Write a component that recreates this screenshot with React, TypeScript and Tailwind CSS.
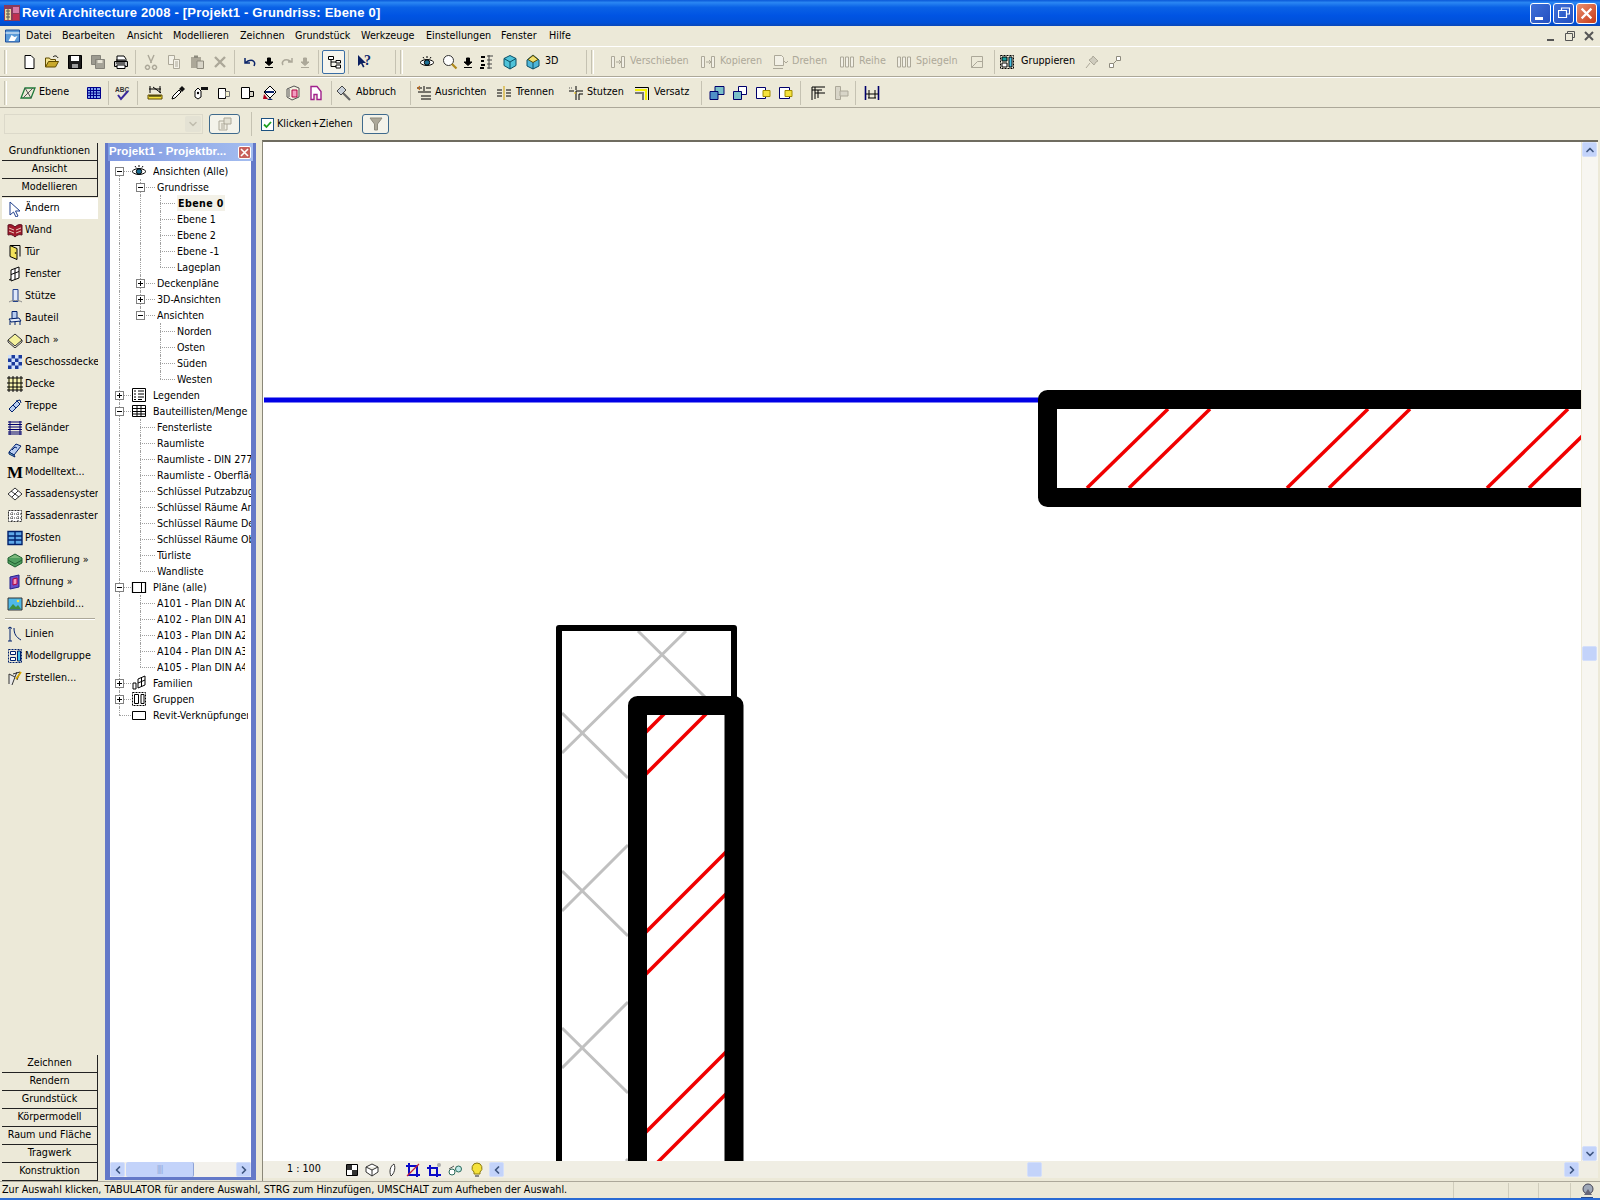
import React from 'react';
import { ChevronDown, ChevronLeft, ChevronRight, ChevronUp } from 'lucide-react';

type IconName = keyof typeof paths;

// small 16x16 toolbar and palette glyphs
const paths = {
  newDoc: <path d="M4 1.5h6l3 3v10H4z" fill="#fff" stroke="#000" />,
  open: <><path d="M1.5 13V4h4l1 1.5h5V8" fill="#f3e28c" stroke="#5f4b00" /><path d="M1.5 13l3-5.5h10l-3 5.5z" fill="#c9a92c" stroke="#5f4b00" /><path d="M9 3c2-2 4-1 5 1" fill="none" stroke="#000" /></>,
  save: <><path d="M1.5 1.5h13v13h-13z" fill="#1c1c1c" stroke="#000" /><path d="M4 2h8v5H4z" fill="#fff" /><path d="M5 10h6v4H5z" fill="#9c9c9c" /></>,
  saveAll: <><path d="M1.5 1.5h9v9h-9z" fill="#9c9a90" stroke="#85837a" /><path d="M5.5 5.5h9v9h-9z" fill="#a5a398" stroke="#85837a" /><path d="M7.5 6h5v3h-5z" fill="#e6e3d6" /></>,
  print: <><path d="M4 2h7l2 3v2H4z" fill="#fff" stroke="#000" /><path d="M1.5 7.5h13v5h-13z" fill="#c8c8c8" stroke="#000" /><path d="M4 11h8v3.5H4z" fill="#fff" stroke="#000" /><path d="M3 9h9M3 6h9" stroke="#000" /></>,
  cut: <path d="M5 1l3.5 8M11 1L7.5 9M6 12a2 2 0 1 1-3 0 2 2 0 0 1 3 0zM13 12a2 2 0 1 1-3 0 2 2 0 0 1 3 0z" fill="none" stroke="#aca899" strokeWidth="1.4" />,
  copy: <><path d="M2.5 1.5h6v9h-6z" fill="#f4f2e8" stroke="#aca899" /><path d="M7.5 5.5h6v9h-6z" fill="#f4f2e8" stroke="#aca899" /><path d="M9 8h3M9 10h3M9 12h3" stroke="#aca899" /></>,
  paste: <><path d="M2 3h10v11H2z" fill="#aca899" /><path d="M5 1.5h4V4H5z" fill="#8d8a7d" /><path d="M8 7h6.5v7.5H8z" fill="#d8d5c8" stroke="#8d8a7d" /></>,
  del: <path d="M3 3l10 10M13 3L3 13" stroke="#aca899" strokeWidth="2.4" />,
  undo: <path d="M12 12c2-4-1-7-6-5L3 9m0-5v5h5" fill="none" stroke="#0a246a" strokeWidth="1.5" />,
  downArrow: <path d="M6.5 4h3v4H12l-4 3.5L4 8h2.5zM4 13.5h8" fill="#000" stroke="#000" />,
  downArrowOff: <path d="M6.5 4h3v4H12l-4 3.5L4 8h2.5zM4 13.5h8" fill="#aca899" stroke="#aca899" />,
  redo: <path d="M4 11c-2-3 1-6 5-5l4 2m0-4v4H9" fill="none" stroke="#aca899" strokeWidth="1.5" />,
  browser: <><path d="M2.5 2.5h5v3h-5zM10 6.5h4.5V9H10zM10 11h4.5v3H10z" fill="#fff" stroke="#000" /><path d="M5 5.5v7h5M5 8h5" fill="none" stroke="#000" /></>,
  help: <><path d="M1 1v11l3-2.5 2 4 1.5-.8-2-3.7H9z" fill="#0a1f60" /><text x="7" y="11" fontSize="14" fontWeight="700" fill="#0a246a" fontFamily="Liberation Serif, serif">?</text></>,
  eye: <><path d="M1 8.5c3-4 11-4 14 0-3 4-11 4-14 0z" fill="#fff" stroke="#000" /><circle cx="8" cy="8.5" r="2.7" fill="#1c6f94" stroke="#000" /><path d="M4 3l1 1.5M8 2v2M12 3l-1 1.5" stroke="#000" /></>,
  mag: <><circle cx="6.5" cy="6.5" r="5" fill="#fff" stroke="#333" /><path d="M10 10l4.5 4.5" stroke="#b08a1c" strokeWidth="2.2" /></>,
  layers: <><path d="M3 2h4v2H3zM3 6h3v2H3zM3 10h4v2H3zM2 13h4v2H2z" fill="#000" /><path d="M9 2h6M9 6h5M9 10h5M9 14h5M11 1v14" stroke="#444" /></>,
  cube: <><path d="M8 1.5l6 3v7L8 15l-6-3.5v-7z" fill="#4fc3d9" stroke="#0a4f66" /><path d="M2 4.5L8 8l6-3.5M8 8v7" fill="none" stroke="#0a4f66" /></>,
  house: <><path d="M8 1l6 5v6l-6 3-6-3V6z" fill="#4fb6d9" stroke="#0a4f66" /><path d="M3 5.5l5-4 5 4-5 3z" fill="#f0e070" stroke="#5f4b00" /><path d="M8 8.5V15" stroke="#0a4f66" /></>,
  moveOff: <><path d="M1.5 2.5h3v11h-3zM11.5 2.5h3v11h-3z" fill="#f2f0e6" stroke="#aca899" /><path d="M6 8h5M9 6l2 2-2 2" fill="none" stroke="#aca899" /></>,
  rotateOff: <><path d="M2.5 1.5h7l2 2v8h-9z" fill="#f2f0e6" stroke="#aca899" /><path d="M1 14.5h10M12 7l2 2 2-2" fill="none" stroke="#aca899" /></>,
  arrayOff: <path d="M1.5 3h3v10h-3zM6.5 3h3v10h-3zM11.5 3h3v10h-3z" fill="#f2f0e6" stroke="#aca899" />,
  resizeOff: <><path d="M2.5 2.5h11v11h-11z" fill="none" stroke="#aca899" /><path d="M2.5 13.5l6-6h5" fill="none" stroke="#aca899" /></>,
  group: <><path d="M1.5 1.5h13v13h-13z" fill="none" stroke="#000" strokeDasharray="2 1" /><path d="M3 3h5v4H3z" fill="#16a3a3" stroke="#000" /><path d="M10 3h3v10h-3z" fill="#49c4e8" stroke="#000" /><path d="M3 9h5v4H3z" fill="#fff" stroke="#000" /></>,
  pinOff: <path d="M9 2l5 5-2 1-2 3-5-5 3-2zM6 9l-4 5" fill="#cfccbe" stroke="#aca899" />,
  linkOff: <path d="M2.5 9.5h4v4h-4zM9.5 2.5h4v4h-4zM6.5 9.5l3-3" fill="#fff" stroke="#8d8a7d" />,
  plane: <><path d="M5 3h10l-4 10H1z" fill="none" stroke="#1f7a3a" strokeWidth="1.3" /><path d="M3 13L13 3M5 3l6 10" stroke="#555" /></>,
  grid: <><path d="M1.5 2.5h13v11h-13z" fill="#7fa3ee" stroke="#00008c" /><path d="M1 5.5h14M1 8h14M1 10.5h14M4.5 2v12M7.5 2v12M10.5 2v12" stroke="#00008c" /></>,
  spell: <><text x="0" y="6.5" fontSize="6.5" fontWeight="700" fill="#333" fontFamily="Liberation Sans, sans-serif">ABC</text><path d="M3 10l3 4 7-8" fill="none" stroke="#3a2a9c" strokeWidth="2" /></>,
  measure: <><path d="M2 4h12M3 1v7M13 1v7M6 2l8 6" fill="none" stroke="#000" /><path d="M1 10h14v4H1z" fill="#f5e23c" stroke="#5f4b00" /><path d="M3 10v2M5 10v2M7 10v2M9 10v2M11 10v2M13 10v2" stroke="#000" /></>,
  dropper: <><path d="M2 14l1-3 6-6 2 2-6 6z" fill="#fff" stroke="#000" /><path d="M9 4l3-3 3 3-3 3z" fill="#111" /></>,
  tag: <><path d="M2 12V6l3-3 3 3v6l-3 2z" fill="#fff" stroke="#000" /><path d="M8 2h7v3H8z" fill="#111" /><circle cx="5" cy="8" r="1.2" fill="#000" /></>,
  wallL: <><path d="M2.5 3.5h7v10h-7z" fill="#fff" stroke="#000" /><path d="M9.5 6.5h4v5h-4z" fill="#f4f1d0" stroke="#777" /></>,
  wallR: <><path d="M2.5 2.5h8v11h-8z" fill="#fff" stroke="#000" /><path d="M10.5 6.5h4v5h-4z" fill="#d8d5c8" stroke="#000" /></>,
  paint: <><path d="M8 1l6 6-6 6-6-6z" fill="#fff" stroke="#000" /><path d="M2 9l4 5H1z" fill="#b00020" /><path d="M8 13l3 2H5z" fill="#0a246a" /><path d="M3 7h9" stroke="#0a246a" strokeWidth="2" /></>,
  cubeRed: <><path d="M2 4l7-3 5 2v9l-7 3-5-3z" fill="#f2efe0" stroke="#555" /><path d="M7 5h5v7H7z" fill="#f29cc0" stroke="#b00040" /><path d="M4 4v8" stroke="#555" /></>,
  notch: <path d="M3 1.5h6l4 5v8H9v-5H6v5H3z" fill="#fff" stroke="#a0208c" strokeWidth="1.4" />,
  hammer: <><path d="M6 7l8 8" stroke="#666" strokeWidth="2.2" /><path d="M1 6l5-5 4 4-5 5z" fill="#c8d0d8" stroke="#444" /></>,
  align: <><path d="M1 3h5M10 3h5M8 1v5M2 7h13M5 11h10M5 14h10" fill="none" stroke="#000" /><path d="M4 5L1.5 3 4 1" fill="none" stroke="#d06000" /></>,
  split: <><path d="M1 5h5M10 5h5M1 8h5M10 8h5M1 11h5M10 11h5" fill="none" stroke="#000" /><path d="M8 1v14" stroke="#d0a000" /></>,
  trim: <><path d="M1 6h5M8 1v4M8 6h7M8 6v9M11 9h4M11 9v6" fill="none" stroke="#000" /><path d="M1 3h4" stroke="#555" strokeDasharray="1 1" /><path d="M6 8h2" stroke="#f0c000" /></>,
  offset: <><path d="M1 2.5h13.5V15" fill="none" stroke="#000" /><path d="M1 5h11v10" fill="none" stroke="#f5f000" strokeWidth="2" /><path d="M1 8h8v7" fill="none" stroke="#777" strokeWidth="2" /></>,
  join: <><path d="M6 1.5h9v8H6z" fill="#7ac0c8" stroke="#00006c" /><path d="M1 6.5h8v8H1z" fill="#4f8fc8" stroke="#00006c" /></>,
  unjoin: <><path d="M6.5 1.5h8v8h-8z" fill="#fff" stroke="#00006c" /><path d="M1.5 6.5h8v8h-8z" fill="#7ac0c8" stroke="#00006c" /></>,
  cutY: <><path d="M1.5 2.5h9v11h-9z" fill="#fff" stroke="#00006c" /><path d="M8 5.5h7v6H8z" fill="#f5e23c" stroke="#a08c00" /></>,
  cutY2: <><path d="M1.5 2.5h10v11h-10z" fill="#fff" stroke="#00006c" /><path d="M7 5.5h7v6H7z" fill="#f5e23c" stroke="#a08c00" /></>,
  corner: <path d="M2 2h13M2 5h10M2 2v13M5 2v12M5 8h10M8 5v8" fill="none" stroke="#000" />,
  beamOff: <><path d="M2.5 1.5h5v13h-5z" fill="#d8d5c8" stroke="#aca899" /><path d="M7 6h8v5H7z" fill="#d8d5c8" stroke="#aca899" /></>,
  dim: <><path d="M1.5 1v14M14.5 1v14" stroke="#00006c" strokeWidth="1.6" /><path d="M2 9h12M5 5v8M11 5v8M4 13h8" stroke="#000" /></>,
  cursor: <path d="M3 1v13l3.5-3 2.5 5 2-1-2.5-5H13z" fill="#fff" stroke="#1f3f8c" />,
  wall: <><path d="M1 3c3-1 5 0 7 2 2-2 4-3 7-2v10c-3-1-5 0-7 2-2-2-4-3-7-2z" fill="#a11a2c" stroke="#5a1020" /><path d="M2 6l5 2M2 9l5 2M14 6L9 8M14 9l-5 2" stroke="#e8c8b8" /></>,
  door: <><path d="M3 1.5h10v11" fill="none" stroke="#000" /><path d="M3 1.5l7 3v11l-7-3z" fill="#f2e25c" stroke="#000" /><circle cx="8.5" cy="9" r=".8" fill="#000" /></>,
  window: <path d="M4 4l8-3v11l-8 3zM8 2.5v11M4 8.5l8-3M2 14l2-1" fill="#fff" stroke="#000" />,
  column: <><path d="M6 1.5h5v12H6z" fill="#dfe8fa" stroke="#1f3f8c" /><path d="M2 14c3-2 10-2 13 0" fill="none" stroke="#888" /></>,
  chair: <><path d="M5 1.5h5v7H5z" fill="#b8cdf0" stroke="#00206c" /><path d="M2 9l10-1 2 3-10 1zM3 11v4M13 11v4M8 12v3" fill="#e5ecf8" stroke="#00206c" /></>,
  roof: <><path d="M1 8l7-6 7 6-7 6z" fill="#f4f19c" stroke="#333" /><path d="M1 8v2l7 6 7-6V8" fill="none" stroke="#333" /></>,
  floor: <><path d="M1 1h14v14H1z" fill="#1a3a9c" /><path d="M1 1h3.5v3.5H1zM8 1h3.5v3.5H8zM4.5 4.5H8V8H4.5zM11.5 4.5H15V8h-3.5zM1 8h3.5v3.5H1zM8 8h3.5v3.5H8zM4.5 11.5H8V15H4.5zM11.5 11.5H15V15h-3.5z" fill="#cfe0fa" /></>,
  ceiling: <><path d="M1 2h14v12H1z" fill="#f9f5b0" /><path d="M0 2h16M0 7h16M0 11h16M0 14h16M2 0v16M6 0v16M10 0v16M14 0v16" stroke="#000" /></>,
  stairs: <><path d="M2 11l4-4 3 3-4 4zM6 7l4-4 3 3-4 4z" fill="#b8cdf0" stroke="#00206c" /><path d="M9 3l4-1 1 3" fill="none" stroke="#00206c" /></>,
  rail: <path d="M1 2h14M1 4.5h14M1 7h14M1 9.5h14M1 12h14M1 14h14M3 1v14M13 1v14" stroke="#00006c" />,
  ramp: <><path d="M2 10l7-8 5 2-7 9z" fill="#b8cdf0" stroke="#00206c" /><path d="M2 10l5 3 1 2-6-3z" fill="#7ac0c8" stroke="#00206c" /><path d="M5 8l3-3 2 1" fill="none" stroke="#00206c" /></>,
  curtain: <><path d="M1 8l7-6 7 6-7 6z" fill="#fff" stroke="#333" /><path d="M4 5l8 6M5 11l6-6" stroke="#333" /></>,
  curtainGrid: <><path d="M1.5 2.5h13v11h-13z" fill="#fff" stroke="#333" strokeDasharray="2 1" /><path d="M1 6h14M1 10h14M5 2v12M11 2v12" stroke="#333" strokeDasharray="1 1" /></>,
  mullion: <><path d="M1 1.5h14v13H1z" fill="#5fa8e8" stroke="#00206c" strokeWidth="1.4" /><path d="M1 6h14M1 10h14M8 1v14" stroke="#00206c" strokeWidth="1.4" /></>,
  sweep: <><path d="M1 6l7-4 7 4-7 4z" fill="#7ab87a" stroke="#1f5f2f" /><path d="M1 6v5l7 4 7-4V6" fill="#4f9f5f" stroke="#1f5f2f" /><path d="M1 8l7 4 7-4" fill="none" stroke="#1f5f2f" /></>,
  opening: <><path d="M3 3l9-2v12l-9 2z" fill="#6a4fc8" stroke="#1f1f8c" /><path d="M6 5l4-1v6l-4 1z" fill="#f29cc0" stroke="#b00040" /></>,
  decal: <><path d="M1 2h14v12H1z" fill="#4fb8e8" stroke="#333" /><path d="M2 13l4-5 3 3 2-2 3 4z" fill="#3f8f3f" /><circle cx="11" cy="5" r="1.3" fill="#f5e23c" /></>,
  lines: <path d="M3 1v14M1 2.5L3 1l2 1.5M1 15h4M7 2c0 6 2 9 7 12" fill="none" stroke="#00206c" />,
  modelGroup: <><path d="M1.5 1.5h13v13h-13z" fill="none" stroke="#00206c" strokeDasharray="2 1" /><path d="M3.5 3.5h5v3h-5zM3.5 9.5h5v3h-5z" fill="#fff" stroke="#00206c" /><path d="M10.5 3h3v10h-3z" fill="#49c4e8" stroke="#00206c" /></>,
  create: <><path d="M2 14V4l6 3-3 8M8 7l2-5M6 4l7-2-3 8" fill="#e8e8e8" stroke="#333" /><path d="M9 9l5-7" stroke="#d8a800" strokeWidth="1.8" /></>,
  legend: <><path d="M1.5 1.5h13v13h-13z" fill="#fff" stroke="#000" /><path d="M3 4h2M7 4h6M3 7h2M7 7h6M3 10h2M7 10h6M3 12.5h2M7 12.5h4" stroke="#000" /></>,
  table: <><path d="M1.5 2.5h13v11h-13z" fill="#fff" stroke="#000" /><path d="M1 5.5h14M1 8.5h14M1 11h14M6 3v10M10 3v10" stroke="#000" /></>,
  sheet: <><path d="M1.5 3.5h13v10h-13z" fill="#fff" stroke="#000" strokeWidth="1.2" /><path d="M10.5 3v10" stroke="#000" /></>,
  family: <><path d="M2 8h3v6H2z" fill="none" stroke="#000" /><path d="M7 4l7-3v9l-7 3zM10.5 2.5v9M7 8l7-3" fill="#fff" stroke="#000" /></>,
  groups: <><path d="M1.5 1.5h13v13h-13z" fill="none" stroke="#000" strokeDasharray="2 1" /><path d="M3.5 3.5h4v9h-4zM10 3.5h3v9h-3z" fill="#fff" stroke="#000" /></>,
  linkRect: <path d="M1.5 4.5h13v8h-13z" fill="#fff" stroke="#000" />,
  viewBox: <><path d="M2.5 2.5h11v11h-11z" fill="#fff" stroke="#000" /><path d="M3 3h5v5H3zM8 8h5v5H8z" fill="#333" /></>,
  wire: <path d="M8 2l6 3v5l-6 4-6-4V5zM2 5l6 3 6-3M8 8v6" fill="#fff" stroke="#333" />,
  sun: <path d="M9 2C5 4 4 10 6 14c3-2 5-8 3-12z" fill="#fff" stroke="#333" />,
  crop: <><path d="M4 1v12h11M1 4h11v11" fill="none" stroke="#0a0ac8" strokeWidth="2" /><path d="M2 14L14 2" stroke="#c02040" strokeWidth="1.3" /></>,
  crop2: <><path d="M4 3v10h11M1 6h10v9" fill="none" stroke="#0a0ac8" strokeWidth="2" /><circle cx="13" cy="3" r="2" fill="#aaa" /></>,
  glasses: <><circle cx="5" cy="10" r="3" fill="#fff" stroke="#2a6a5a" /><circle cx="11.5" cy="7" r="3" fill="#bfe8e8" stroke="#2a6a5a" /><path d="M2 7l5-3" stroke="#555" /></>,
  bulb: <><path d="M8 1a5 5 0 0 1 3 9v2H5v-2A5 5 0 0 1 8 1z" fill="#f5e23c" stroke="#8a7a10" /><path d="M6 13h4v2H6z" fill="#888" /></>,
  dish: <><circle cx="9" cy="6" r="5" fill="#9fa8b8" stroke="#445" /><path d="M5 12l4-6 4 6z" fill="#667" /><path d="M2 15h12" stroke="#2a4a8c" strokeWidth="2" /></>,
};

const Icon = ({ name, size = 16 }: { name: IconName; size?: number }) => (
  <svg viewBox="0 0 16 16" width={size} height={size} className="shrink-0">
    {paths[name]}
  </svg>
);

const Tool = ({ name, className = 'w-[23px]' }: { name: IconName; className?: string }) => (
  <div className={`flex h-[22px] shrink-0 items-center justify-center ${className}`}>
    <Icon name={name} />
  </div>
);

const Labeled = ({
  name,
  label,
  className,
  off = false,
  gap = 'gap-[4px]',
}: {
  name: IconName;
  label: string;
  className: string;
  off?: boolean;
  gap?: string;
}) => (
  <div className={`flex h-[22px] shrink-0 items-center ${gap} ${className}`}>
    <Icon name={name} />
    <span className={off ? 'text-[#aca899]' : 'text-black'}>{label}</span>
  </div>
);

const Sep = ({ className = '' }: { className?: string }) => (
  <div className={`h-[24px] w-px shrink-0 bg-[#c5c2b2] ${className}`} />
);

const Grip = () => <div className="ml-[4px] h-[24px] w-[3px] shrink-0 border-l border-[#c5c2b2] border-r border-r-white" />;

const MenuBar = () => {
  const items = [
    ['Datei', 'w-[36px]'],
    ['Bearbeiten', 'w-[65px]'],
    ['Ansicht', 'w-[46px]'],
    ['Modellieren', 'w-[67px]'],
    ['Zeichnen', 'w-[55px]'],
    ['Grundstück', 'w-[66px]'],
    ['Werkzeuge', 'w-[65px]'],
    ['Einstellungen', 'w-[75px]'],
    ['Fenster', 'w-[48px]'],
    ['Hilfe', 'w-[30px]'],
  ];
  return (
    <div className="flex h-[20px] shrink-0 items-center bg-[#ece9d8] pl-[4px] text-[10.7px]">
      <svg viewBox="0 0 16 16" width="17" height="16" className="mr-[5px] shrink-0">
        <path d="M1 2h14v12H1z" fill="#5a9ad8" stroke="#1f4f9c" />
        <path d="M1 5h14" stroke="#fff" />
        <path d="M4 13l3-6 3 2 3-1-3 5z" fill="#fff" />
      </svg>
      {items.map(([t, w]) => (
        <span key={t} className={`shrink-0 ${w}`}>{t}</span>
      ))}
      <div className="ml-auto flex items-center pr-[2px]">
        <div className="flex h-[18px] w-[19px] items-end justify-center pb-[4px]">
          <div className="h-[2px] w-[7px] bg-[#555]" />
        </div>
        <div className="flex h-[18px] w-[19px] items-center justify-center">
          <svg viewBox="0 0 10 10" width="10" height="10"><path d="M2.5 2.5V.5h7v6h-2M.5 2.5h7v7h-7z" fill="none" stroke="#555" /></svg>
        </div>
        <div className="flex h-[18px] w-[19px] items-center justify-center">
          <svg viewBox="0 0 10 10" width="10" height="10"><path d="M1 1l8 8M9 1L1 9" stroke="#555" strokeWidth="2" /></svg>
        </div>
      </div>
    </div>
  );
};

const TitleBar = () => (
  <div className="flex h-[26px] shrink-0 items-center bg-[linear-gradient(180deg,#0a58d8_0%,#2a86f2_10%,#0a62e6_28%,#0054e3_60%,#0050d8_88%,#0a48b8_100%)] pl-[4px] pr-[3px]">
    <svg viewBox="0 0 16 16" width="16" height="16" className="shrink-0">
      <path d="M0 0h16v16H0z" fill="#8a3a5a" />
      <path d="M1 4h6v11H1z" fill="#e8d8a0" />
      <path d="M9 2h6v6H9z" fill="#d87aa8" />
      <path d="M2 6h4M2 9h4M2 12h4M4 4v11" stroke="#555" />
      <path d="M9 9h6v6H9z" fill="#c03050" />
    </svg>
    <span className="ml-[2px] font-['Liberation_Sans',sans-serif] text-[13px] font-bold tracking-[0.2px] text-white">
      Revit Architecture 2008 - [Projekt1 - Grundriss: Ebene 0]
    </span>
    <div className="ml-auto flex items-center gap-[2px]">
      <div className="flex h-[21px] w-[21px] items-end rounded-[3px] border border-white bg-[linear-gradient(135deg,#3f70d8,#2450c0)] pb-[3px] pl-[4px]">
        <div className="h-[3px] w-[8px] bg-white" />
      </div>
      <div className="flex h-[21px] w-[21px] items-center justify-center rounded-[3px] border border-white bg-[linear-gradient(135deg,#3f70d8,#2450c0)]">
        <svg viewBox="0 0 12 12" width="12" height="12"><path d="M3.5 3V1h8v6H9M.5 3.5h8v7h-8z" fill="none" stroke="#fff" strokeWidth="1.2" /></svg>
      </div>
      <div className="flex h-[21px] w-[21px] items-center justify-center rounded-[3px] border border-white bg-[linear-gradient(135deg,#e89070,#c83a18)]">
        <svg viewBox="0 0 12 12" width="13" height="13"><path d="M1.5 1.5l9 9M10.5 1.5l-9 9" stroke="#fff" strokeWidth="2" /></svg>
      </div>
    </div>
  </div>
);

const ToolbarOne = () => (
  <div className="flex h-[31px] shrink-0 items-center border-y border-t-white border-b-[#aca899] bg-[#ece9d8] text-[10.7px]">
    <Grip />
    <Tool name="newDoc" className="ml-[10px] w-[23px]" />
    <Tool name="open" />
    <Tool name="save" />
    <Tool name="saveAll" />
    <Tool name="print" />
    <Sep className="ml-[3px] mr-[3px]" />
    <Tool name="cut" />
    <Tool name="copy" />
    <Tool name="paste" />
    <Tool name="del" />
    <Sep className="ml-[3px] mr-[3px]" />
    <Tool name="undo" />
    <Tool name="downArrow" className="w-[16px]" />
    <Tool name="redo" className="w-[20px]" />
    <Tool name="downArrowOff" className="w-[16px]" />
    <Sep className="ml-[5px] mr-[3px]" />
    <div className="flex h-[24px] w-[23px] shrink-0 items-center justify-center rounded-[2px] border border-[#3a6ea5] bg-[#f6f5ee]">
      <Icon name="browser" />
    </div>
    <Sep className="ml-[3px]" />
    <Tool name="help" className="ml-[4px] w-[23px]" />
    <Sep className="ml-[19px]" />
    <Grip />
    <Tool name="eye" className="ml-[12px] w-[23px]" />
    <Tool name="mag" />
    <Tool name="downArrow" className="w-[14px]" />
    <Tool name="layers" className="w-[21px]" />
    <Tool name="cube" className="ml-[2px] w-[23px]" />
    <Tool name="house" />
    <span className="w-[42px] shrink-0 pl-[1px]">3D</span>
    <Sep />
    <Grip />
    <Labeled name="moveOff" label="Verschieben" off className="ml-[16px] w-[90px]" />
    <Labeled name="moveOff" label="Kopieren" off className="w-[72px]" />
    <Labeled name="rotateOff" label="Drehen" off className="w-[67px]" />
    <Labeled name="arrayOff" label="Reihe" off className="w-[57px]" />
    <Labeled name="arrayOff" label="Spiegeln" off className="w-[73px]" />
    <Tool name="resizeOff" className="w-[16px]" />
    <Sep className="ml-[9px]" />
    <Labeled name="group" label="Gruppieren" className="ml-[4px] gap-[6px] w-[85px]" />
    <Tool name="pinOff" className="w-[16px]" />
    <Tool name="linkOff" className="ml-[7px] w-[16px]" />
  </div>
);

const ToolbarTwo = () => (
  <div className="flex h-[31px] shrink-0 items-center border-b border-b-[#aca899] border-t border-t-white bg-[#ece9d8] text-[10.7px]">
    <Grip />
    <Labeled name="plane" label="Ebene" gap="gap-[3px]" className="ml-[13px] w-[62px]" />
    <Tool name="grid" />
    <Sep className="ml-[3px]" />
    <Tool name="spell" className="ml-[2px] w-[23px]" />
    <Sep className="ml-[3px]" />
    <Tool name="measure" className="ml-[5px] w-[23px]" />
    <Tool name="dropper" />
    <Tool name="tag" />
    <Tool name="wallL" />
    <Tool name="wallR" />
    <Tool name="paint" />
    <Tool name="cubeRed" />
    <Tool name="notch" />
    <Sep className="ml-[4px]" />
    <Labeled name="hammer" label="Abbruch" className="ml-[4px] w-[71px]" />
    <Sep className="ml-[3px]" />
    <Labeled name="align" label="Ausrichten" gap="gap-[3px]" className="ml-[5px] w-[80px]" />
    <Labeled name="split" label="Trennen" className="w-[72px]" />
    <Labeled name="trim" label="Stutzen" gap="gap-[3px]" className="w-[66px]" />
    <Labeled name="offset" label="Versatz" className="w-[62px]" />
    <Sep className="ml-[5px]" />
    <Tool name="join" className="ml-[3px] w-[23px]" />
    <Tool name="unjoin" />
    <Tool name="cutY" />
    <Tool name="cutY2" />
    <Sep className="ml-[3px]" />
    <Tool name="corner" className="ml-[5px] w-[23px]" />
    <Tool name="beamOff" />
    <Sep className="ml-[3px]" />
    <Tool name="dim" className="ml-[4px] w-[23px]" />
  </div>
);

const OptionsBar = () => (
  <div className="flex h-[33px] shrink-0 items-center bg-[#ece9d8] pb-[1px] text-[10.7px]">
    <div className="ml-[4px] flex h-[20px] w-[199px] shrink-0 items-center justify-end border border-[#dcd9ca] pr-[1px]">
      <div className="flex h-[16px] w-[16px] items-center justify-center rounded-[2px] bg-[#e4e2d4]">
        <ChevronDown size={12} strokeWidth={3} color="#c0bdae" />
      </div>
    </div>
    <div className="ml-[6px] flex h-[20px] w-[31px] shrink-0 items-center justify-center rounded-[3px] border border-[#3f6a8c] bg-[#f4f3ea]">
      <svg viewBox="0 0 16 16" width="16" height="16"><path d="M2 5h8v9H2z" fill="#f0eee2" stroke="#aca899" /><path d="M7 2h7v6H7z" fill="#e4e2d4" stroke="#aca899" /><path d="M4 8h4M4 10h4M4 12h4" stroke="#aca899" /></svg>
    </div>
    <Sep className="ml-[11px]" />
    <div className="ml-[9px] flex h-[13px] w-[13px] shrink-0 items-center justify-center border border-[#1c5180] bg-white">
      <svg viewBox="0 0 11 11" width="11" height="11"><path d="M2 5.5L4.500 8 9 3" fill="none" stroke="#21a121" strokeWidth="1.8" /></svg>
    </div>
    <span className="ml-[3px] w-[85px] shrink-0">Klicken+Ziehen</span>
    <div className="flex h-[20px] w-[27px] shrink-0 items-center justify-center rounded-[3px] border border-[#3f6a8c] bg-[#f4f3ea]">
      <svg viewBox="0 0 16 16" width="16" height="16"><path d="M2 2h12L9.500 8v6h-3V8z" fill="#aca899" stroke="#8d8a7d" /></svg>
    </div>
  </div>
);

const Tab = ({ label }: { label: string }) => (
  <div className="flex h-[18px] shrink-0 items-center justify-center border-b border-r border-b-[#222] border-r-[#222] bg-[#ece9d8] text-[10.7px]">
    {label}
  </div>
);

const tools: [IconName | 'M', string][] = [
  ['wall', 'Wand'],
  ['door', 'Tür'],
  ['window', 'Fenster'],
  ['column', 'Stütze'],
  ['chair', 'Bauteil'],
  ['roof', 'Dach »'],
  ['floor', 'Geschossdecke'],
  ['ceiling', 'Decke'],
  ['stairs', 'Treppe'],
  ['rail', 'Geländer'],
  ['ramp', 'Rampe'],
  ['M', 'Modelltext...'],
  ['curtain', 'Fassadensystem'],
  ['curtainGrid', 'Fassadenraster'],
  ['mullion', 'Pfosten'],
  ['sweep', 'Profilierung »'],
  ['opening', 'Öffnung »'],
  ['decal', 'Abziehbild...'],
];

const ToolRow = ({ icon, label }: { icon: IconName | 'M'; label: string }) => (
  <div className="flex h-[22px] shrink-0 items-center gap-[2px] overflow-hidden whitespace-nowrap pl-[5px] text-[10.7px]">
    {icon === 'M' ? (
      <span className="w-[16px] shrink-0 text-center font-['Liberation_Serif',serif] text-[17px] font-bold leading-none">M</span>
    ) : (
      <Icon name={icon} />
    )}
    <span>{label}</span>
  </div>
);

const Sidebar = () => (
  <div className="flex w-[98px] shrink-0 flex-col pl-[2px] pt-[2px]">
    <Tab label="Grundfunktionen" />
    <Tab label="Ansicht" />
    <Tab label="Modellieren" />
    <div className="mt-[1px] flex h-[21px] items-center gap-[2px] bg-white pl-[5px] text-[10.7px]">
      <Icon name="cursor" />
      <span>Ändern</span>
    </div>
    {tools.map(([icon, label]) => (
      <ToolRow key={label} icon={icon} label={label} />
    ))}
    <div className="mx-[3px] my-[3px] h-[2px] border-t border-b border-t-[#aca899] border-b-white" />
    <ToolRow icon="lines" label="Linien" />
    <ToolRow icon="modelGroup" label="Modellgruppe" />
    <ToolRow icon="create" label="Erstellen..." />
    <div className="mt-auto flex flex-col">
      {['Zeichnen', 'Rendern', 'Grundstück', 'Körpermodell', 'Raum und Fläche', 'Tragwerk', 'Konstruktion'].map((t) => (
        <Tab key={t} label={t} />
      ))}
    </div>
  </div>
);

type Node = { t: string; l: number; box?: '+' | '-'; icon?: IconName; bold?: boolean; clip?: boolean };

const tree: Node[] = [
  { t: 'Ansichten (Alle)', l: 0, box: '-', icon: 'eye' },
  { t: 'Grundrisse', l: 1, box: '-' },
  { t: 'Ebene 0', l: 2, bold: true },
  { t: 'Ebene 1', l: 2 },
  { t: 'Ebene 2', l: 2 },
  { t: 'Ebene -1', l: 2 },
  { t: 'Lageplan', l: 2 },
  { t: 'Deckenpläne', l: 1, box: '+' },
  { t: '3D-Ansichten', l: 1, box: '+' },
  { t: 'Ansichten', l: 1, box: '-' },
  { t: 'Norden', l: 2 },
  { t: 'Osten', l: 2 },
  { t: 'Süden', l: 2 },
  { t: 'Westen', l: 2 },
  { t: 'Legenden', l: 0, box: '+', icon: 'legend' },
  { t: 'Bauteillisten/Mengen', l: 0, box: '-', icon: 'table' },
  { t: 'Fensterliste', l: 1 },
  { t: 'Raumliste', l: 1 },
  { t: 'Raumliste - DIN 277', l: 1 },
  { t: 'Raumliste - Oberflächen', l: 1 },
  { t: 'Schlüssel Putzabzug', l: 1 },
  { t: 'Schlüssel Räume Art', l: 1 },
  { t: 'Schlüssel Räume Decke', l: 1 },
  { t: 'Schlüssel Räume Oberfl', l: 1 },
  { t: 'Türliste', l: 1 },
  { t: 'Wandliste', l: 1 },
  { t: 'Pläne (alle)', l: 0, box: '-', icon: 'sheet' },
  { t: 'A101 - Plan DIN A0', l: 1, clip: true },
  { t: 'A102 - Plan DIN A1', l: 1, clip: true },
  { t: 'A103 - Plan DIN A2', l: 1, clip: true },
  { t: 'A104 - Plan DIN A3', l: 1, clip: true },
  { t: 'A105 - Plan DIN A4', l: 1, clip: true },
  { t: 'Familien', l: 0, box: '+', icon: 'family' },
  { t: 'Gruppen', l: 0, box: '+', icon: 'groups' },
  { t: 'Revit-Verknüpfungen', l: 0, icon: 'linkRect' },
];

const columnX = [9, 30, 50];
const textX = [43, 47, 67];

// is there a later sibling of the row at this index?
const hasNext = (i: number) => {
  for (let j = i + 1; j < tree.length; j++) {
    if (tree[j].l < tree[i].l) return false;
    if (tree[j].l === tree[i].l) return true;
  }
  return false;
};

const ancestorAt = (i: number, level: number) => {
  for (let j = i; j >= 0; j--) {
    if (tree[j].l === level) return j;
  }
  return 0;
};

const TreeRow = ({ n, i }: { n: Node; i: number }) => {
  const x = columnX[n.l];
  return (
    <div className="relative h-[16px] shrink-0 whitespace-nowrap text-[10.6px] leading-[16px]">
      {[0, 1, 2].filter((c) => c < n.l && hasNext(ancestorAt(i, c))).map((c) => (
        <span key={c} className="absolute top-0 h-[16px] border-l border-dotted border-[#a0a0a0]" style={{ left: columnX[c] }} />
      ))}
      {i > 0 && <span className="absolute top-0 h-[8px] border-l border-dotted border-[#a0a0a0]" style={{ left: x }} />}
      {hasNext(i) && <span className="absolute top-[8px] h-[8px] border-l border-dotted border-[#a0a0a0]" style={{ left: x }} />}
      <span
        className="absolute top-[8px] border-t border-dotted border-[#a0a0a0]"
        style={{ left: x, width: n.l === 0 ? 12 : textX[n.l] - x - 2 }}
      />
      {n.box && (
        <span className="absolute top-[4px] flex h-[9px] w-[9px] items-center justify-center border border-[#808080] bg-white" style={{ left: x - 4 }}>
          <span className="absolute h-px w-[5px] bg-black" />
          {n.box === '+' && <span className="absolute h-[5px] w-px bg-black" />}
        </span>
      )}
      {n.icon && (
        <span className="absolute left-[21px] top-0 bg-white">
          <Icon name={n.icon} />
        </span>
      )}
      <span
        className={`absolute top-0 overflow-hidden ${n.bold ? 'bg-[#f3f1e8] px-px font-bold tracking-[0.4px]' : ''} ${n.clip ? 'w-[88px]' : 'max-w-[calc(100%-46px)]'}`}
        style={{ left: textX[n.l] }}
      >
        {n.t}
      </span>
    </div>
  );
};

const ScrollBtn = ({ children }: { children: React.ReactNode }) => (
  <div className="flex h-[15px] w-[15px] shrink-0 items-center justify-center rounded-[2px] border border-[#d4dffa] bg-[#c3d3fa] text-[#3f5680]">
    {children}
  </div>
);

const ProjectBrowser = () => (
  <div className="ml-[7px] mt-[2px] flex h-[1037px] w-[151px] shrink-0 flex-col border-x-[5px] border-b-[3px] border-x-[#6479c8] border-b-[#6479c8]">
    <div className="-mx-[2px] flex h-[18px] shrink-0 items-center bg-[linear-gradient(90deg,#7f98e0,#a4bdf0)] pl-[1px] pr-[2px]">
      <span className="font-['Liberation_Sans',sans-serif] text-[11.5px] font-bold tracking-[0.1px] text-white">Projekt1 - Projektbr...</span>
      <div className="ml-auto flex h-[13px] w-[13px] items-center justify-center rounded-[2px] border border-white bg-[#c8605c]">
        <svg viewBox="0 0 9 9" width="9" height="9"><path d="M1 1l7 7M8 1L1 8" stroke="#fff" strokeWidth="1.6" /></svg>
      </div>
    </div>
    <div className="flex min-h-0 flex-1 flex-col overflow-hidden bg-white pt-[2px]">
      {tree.map((n, i) => (
        <TreeRow key={n.t} n={n} i={i} />
      ))}
    </div>
    <div className="flex h-[15px] shrink-0 items-center justify-between bg-[#f3f1ec]">
      <ScrollBtn><ChevronLeft size={12} strokeWidth={3.5} /></ScrollBtn>
      <div className="ml-px mr-auto flex h-[15px] w-[68px] items-center justify-center rounded-[2px] border-r border-[#8ea3d6] bg-[#c3d3fa] text-[8px] tracking-[-1px] text-[#8ea3d6]">||||</div>
      <ScrollBtn><ChevronRight size={12} strokeWidth={3.5} /></ScrollBtn>
    </div>
  </div>
);

const wallHatch = [0, 42, 200, 242, 400, 442, 600, 642];
const columnHatch = [1378, 1420, 1578, 1620, 1778, 1820];

const Drawing = () => (
  <svg viewBox="263 142 1318 1019" width="1318" height="1019" className="block shrink-0">
    <rect x="263" y="142" width="1318" height="1019" fill="#fff" />
    <path d="M264 400H1040" stroke="#0000e6" strokeWidth="5" fill="none" />
    {wallHatch.map((d) => (
      <line key={d} x1={1087 + d} y1="488" x2={1168 + d} y2="409" stroke="#f00000" strokeWidth="3.5" />
    ))}
    <path d="M1047.5 399.5H1700V497.5H1047.5Z" fill="none" stroke="#000" strokeWidth="19" strokeLinejoin="round" />

    <g stroke="#c0c0c0" strokeWidth="3" fill="none">
      <path d="M562 753L686 631M638 631L705 697" />
      <path d="M562 713L628 778M562 871L628 936M562 1028L628 1093" />
      <path d="M562 911L628 845M562 1068L628 1002M626 1161L628 1159" />
    </g>
    <path d="M559 1165V628H734V700" fill="none" stroke="#000" strokeWidth="6" strokeLinejoin="round" />
    <rect x="640" y="705" width="94" height="460" fill="#fff" />
    {columnHatch.map((c) => (
      <line key={c} x1="640" y1={c - 640} x2={Math.min(732, c - 705)} y2={Math.max(c - 732, 705)} stroke="#f00000" strokeWidth="3.5" />
    ))}
    <path d="M637.5 1170V705.5H734V1170" fill="none" stroke="#000" strokeWidth="19" strokeLinejoin="round" />
  </svg>
);

const ViewArea = () => (
  <div className="ml-[6px] mr-[2px] -mt-px flex min-w-0 flex-1 flex-col border-l border-t-2 border-l-[#8a8778] border-t-[#6f6c60] pb-[3px]">
    <div className="flex min-h-0 flex-1">
      <Drawing />
      <div className="ml-px flex w-[16px] shrink-0 flex-col bg-[#f7f6f1]">
        <ScrollBtn><ChevronUp size={12} strokeWidth={3.5} /></ScrollBtn>
        <div className="mt-[489px] h-[15px] w-[15px] rounded-[2px] border border-[#d4dffa] bg-[#c3d3fa]" />
        <div className="mt-auto"><ScrollBtn><ChevronDown size={12} strokeWidth={3.5} /></ScrollBtn></div>
      </div>
    </div>
    <div className="flex h-[17px] shrink-0 items-center bg-[#f0eee4] text-[10.7px]">
      <span className="ml-[24px] w-[54px] shrink-0">1 : 100</span>
      <Tool name="viewBox" className="w-[21px]" />
      <Tool name="wire" className="w-[20px]" />
      <Tool name="sun" className="w-[21px]" />
      <Tool name="crop" className="w-[20px]" />
      <Tool name="crop2" className="w-[21px]" />
      <Tool name="glasses" className="w-[21px]" />
      <Tool name="bulb" className="w-[23px]" />
      <div className="ml-[1px]"><ScrollBtn><ChevronLeft size={12} strokeWidth={3.5} /></ScrollBtn></div>
      <div className="ml-[523px] h-[15px] w-[15px] rounded-[2px] border border-[#d4dffa] bg-[#c3d3fa]" />
      <div className="ml-auto mr-[19px]"><ScrollBtn><ChevronRight size={12} strokeWidth={3.5} /></ScrollBtn></div>
    </div>
  </div>
);

const StatusBar = () => (
  <div className="flex h-[17px] shrink-0 items-center border-t border-t-[#aca899] bg-[#ece9d8] pt-[1px] text-[10.7px]">
    <span className="ml-[2px] w-[1452px] shrink-0 border-r border-r-[#d0cdbc]">
      Zur Auswahl klicken, TABULATOR für andere Auswahl, STRG zum Hinzufügen, UMSCHALT zum Aufheben der Auswahl.
    </span>
    <div className="h-[15px] w-[55px] shrink-0 border-r border-r-[#d0cdbc]" />
    <div className="h-[15px] w-[30px] shrink-0 border-r border-r-[#d0cdbc]" />
    <div className="h-[15px] w-[32px] shrink-0 border-r border-r-[#d0cdbc]" />
    <div className="ml-[8px]"><Icon name="dish" /></div>
  </div>
);

export default function App() {
  return (
    <div className="flex h-[1200px] w-[1600px] flex-col overflow-hidden bg-[#ece9d8] font-['DejaVu_Sans_Condensed','DejaVu_Sans',sans-serif] text-black">
      <TitleBar />
      <MenuBar />
      <ToolbarOne />
      <ToolbarTwo />
      <OptionsBar />
      <div className="flex min-h-0 flex-1">
        <Sidebar />
        <ProjectBrowser />
        <ViewArea />
      </div>
      <StatusBar />
      <div className="h-[2px] shrink-0 bg-[#2a6bd4]" />
    </div>
  );
}
